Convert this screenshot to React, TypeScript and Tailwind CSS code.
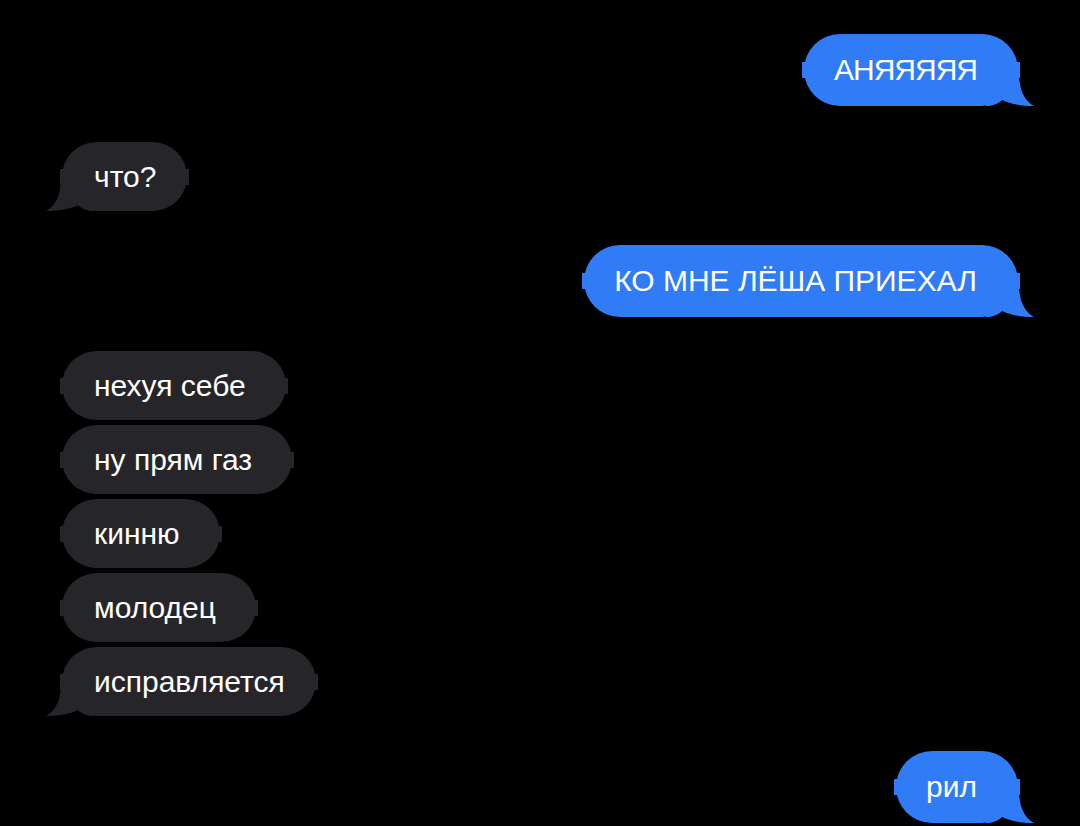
import React from "react";

type Msg = { text: string; me: boolean; tail: boolean; mt: string };

const messages: Msg[] = [
  { text: "АНЯЯЯЯЯ", me: true, tail: true, mt: "mt-[34px]" },
  { text: "что?", me: false, tail: true, mt: "mt-[36px]" },
  { text: "КО МНЕ ЛЁША ПРИЕХАЛ", me: true, tail: true, mt: "mt-[34px]" },
  { text: "нехуя себе", me: false, tail: false, mt: "mt-[34px]" },
  { text: "ну прям газ", me: false, tail: false, mt: "mt-[5px]" },
  { text: "кинню", me: false, tail: false, mt: "mt-[5px]" },
  { text: "молодец", me: false, tail: false, mt: "mt-[5px]" },
  { text: "исправляется", me: false, tail: true, mt: "mt-[5px]" },
  { text: "рил", me: true, tail: true, mt: "mt-[35px]" },
];

function Tail({ me }: { me: boolean }) {
  return (
    <svg
      width="48"
      height="36"
      viewBox="0 0 48 36"
      className={
        me
          ? "absolute bottom-0 right-[-16px]"
          : "absolute bottom-0 left-[-16px] -scale-x-100"
      }
    >
      <path
        d="M0 36 C6 36 12 34 16 30 C24 34 36 36 48 36 C40 32 35 22 34 14 C33 8 32 4 32 0 L0 0 Z"
        fill={me ? "#2f7cf6" : "#262529"}
      />
    </svg>
  );
}

function Bubble({ m }: { m: Msg }) {
  const color = m.me ? "bg-[#2f7cf6]" : "bg-[#262529]";
  let pad = "";
  if (m.me) pad = "h-[72px] pl-[30px] pr-[41px]";
  else if (m.tail) pad = "h-[69px] pl-[32px] pr-[31px]";
  else pad = "h-[69px] pl-[32px] pr-[40px]";
  return (
    <div className={`flex ${m.me ? "justify-end" : "justify-start"} ${m.mt}`}>
      <div
        className={`relative flex items-center rounded-full text-[30px] leading-none text-white ${color} ${pad} ${
          m.text === "АНЯЯЯЯЯ" ? "tracking-[-1px]" : ""
        }`}
      >
        <span className={`absolute left-[-2px] top-1/2 h-[16px] w-[4px] -translate-y-1/2 ${color}`} />
        <span className={`absolute right-[-2px] top-1/2 h-[16px] w-[4px] -translate-y-1/2 ${color}`} />
        {m.tail && <Tail me={m.me} />}
        <span className="relative">{m.text}</span>
      </div>
    </div>
  );
}

export default function App() {
  return (
    <div
      className="h-[826px] w-[1080px] overflow-hidden bg-black px-[62px]"
      style={{ fontFamily: '"Liberation Sans", Arial, sans-serif' }}
    >
      {messages.map((m, i) => (
        <Bubble key={i} m={m} />
      ))}
    </div>
  );
}
